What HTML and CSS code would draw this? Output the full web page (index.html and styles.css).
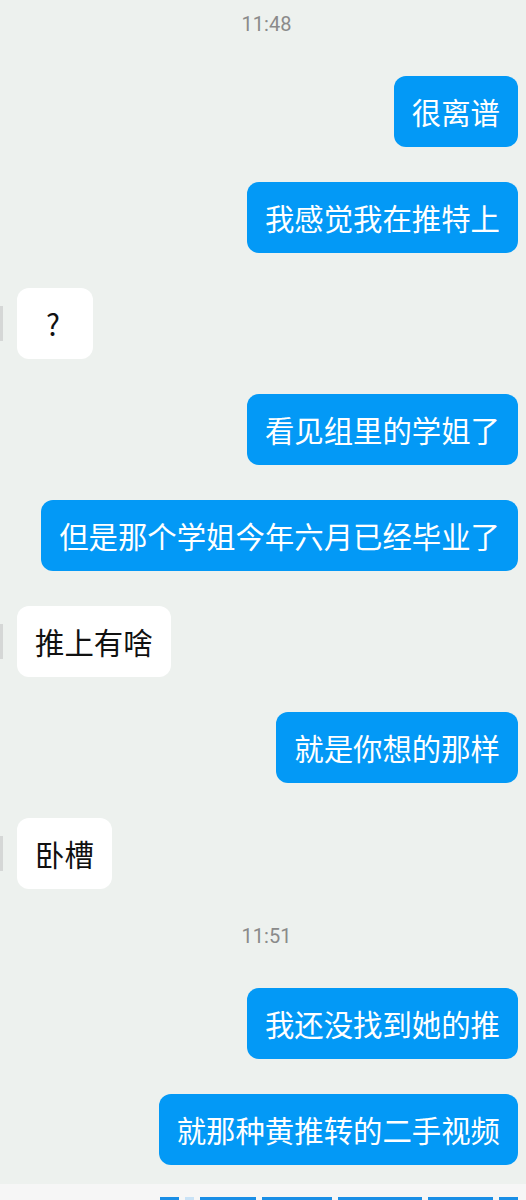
FILE: index.html
```html
<!DOCTYPE html>
<html lang="zh-CN">
<head>
    <meta charset="UTF-8">
    <meta name="viewport" content="width=device-width, initial-scale=1.0">
    <title>聊天</title>
    <link rel="stylesheet" href="styles.css">
</head>
<body>
    <div class="chat">
        <div class="time first">11:48</div>

        <div class="row out"><div class="bubble">很离谱</div></div>
        <div class="row out"><div class="bubble">我感觉我在推特上</div></div>
        <div class="row in"><span class="avatar-edge"></span><div class="bubble short">?</div></div>
        <div class="row out"><div class="bubble">看见组里的学姐了</div></div>
        <div class="row out"><div class="bubble">但是那个学姐今年六月已经毕业了</div></div>
        <div class="row in"><span class="avatar-edge"></span><div class="bubble">推上有啥</div></div>
        <div class="row out"><div class="bubble">就是你想的那样</div></div>
        <div class="row in"><span class="avatar-edge"></span><div class="bubble">卧槽</div></div>

        <div class="time">11:51</div>

        <div class="row out"><div class="bubble">我还没找到她的推</div></div>
        <div class="row out"><div class="bubble">就那种黄推转的二手视频</div></div>
    </div>

    <!-- next message is cut off by the bottom of the screen -->
    <div class="next">
        <div class="preview">
            <span class="seg" style="width: 20px"></span>
            <span class="seg light" style="width: 10px"></span>
            <span class="seg" style="width: 60px"></span>
            <span class="seg" style="width: 75px"></span>
            <span class="seg" style="width: 90px"></span>
            <span class="seg" style="width: 70px"></span>
            <span class="seg" style="width: 20px"></span>
        </div>
    </div>
</body>
</html>
```

FILE: styles.css
```css
body {
    margin: 0;
    padding: 0;
    background-color: #edf1ee;
    font-family: "Noto Sans CJK SC", "Noto Sans", sans-serif;
    overflow: hidden;
}

.chat {
    display: flex;
    flex-direction: column;
    gap: 35px;
    padding: 12px 0 19px 0;
}

.time {
    font-family: Roboto, "Noto Sans", sans-serif;
    font-size: 20px;
    line-height: 24px;
    color: #8a8a8a;
    text-align: center;
    margin-bottom: 5px;
    padding-left: 7px;
}

.row {
    display: flex;
    align-items: center;
}

.row.out {
    justify-content: flex-end;
    padding-right: 8px;
}

.row.in {
    gap: 14px;
}

.avatar-edge {
    width: 3px;
    height: 35px;
    background-color: #d5d7d6;
}

.bubble {
    font-size: 29.4px;
    line-height: 35px;
    padding: 18px 18px;
    border-radius: 12px;
    white-space: nowrap;
}

.out .bubble {
    background-color: #0399f6;
    color: #fff;
}

.in .bubble {
    background-color: #fff;
    color: #111;
}

.bubble.short {
    padding-left: 29px;
    padding-right: 33px;
}

.next {
    background-color: #f6f6f6;
    height: 40px;
    padding: 13px 8px 0 160px;
}

.preview {
    display: flex;
    gap: 6px;
}

.seg {
    height: 8px;
    background-color: #1a8ee6;
}

.seg.light {
    background-color: #c9e2f6;
}
```
